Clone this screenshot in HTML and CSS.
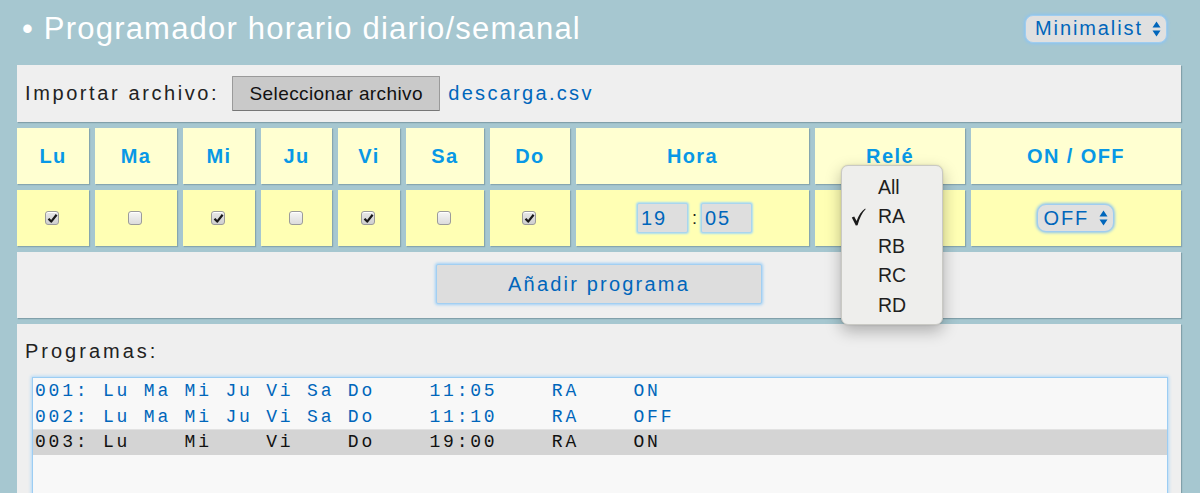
FILE: index.html
```html
<!DOCTYPE html>
<html lang="es">
<head>
<meta charset="utf-8">
<title>Programador horario</title>
<link rel="stylesheet" href="styles.css">
</head>
<body>
<header class="topbar">
  <h1 class="title">• Programador horario diario/semanal</h1>
  <div class="select theme-select">
    <span>Minimalist</span>
    <svg class="arrows" width="9" height="16" viewBox="0 0 9 16"><path d="M4.5 0.5 L8.5 6.5 L0.5 6.5 Z M4.5 15.5 L8.5 9.5 L0.5 9.5 Z" fill="#0066bb"/></svg>
  </div>
</header>
<main class="content">
  <section class="panel import">
    <span class="label">Importar archivo:</span>
    <button class="file-btn">Seleccionar archivo</button>
    <span class="filename">descarga.csv</span>
  </section>

  <section class="grid">
    <div class="cell head">Lu</div>
    <div class="cell head">Ma</div>
    <div class="cell head">Mi</div>
    <div class="cell head">Ju</div>
    <div class="cell head">Vi</div>
    <div class="cell head">Sa</div>
    <div class="cell head">Do</div>
    <div class="cell head">Hora</div>
    <div class="cell head">Relé</div>
    <div class="cell head">ON / OFF</div>

    <div class="cell val"><span class="cb checked"><svg width="11" height="11" viewBox="0 0 11 11"><path d="M1.5 5.8 L4.2 8.6 L9.6 1.8" fill="none" stroke="#1a1a1a" stroke-width="2.2" stroke-linejoin="round"/></svg></span></div>
    <div class="cell val"><span class="cb"></span></div>
    <div class="cell val"><span class="cb checked"><svg width="11" height="11" viewBox="0 0 11 11"><path d="M1.5 5.8 L4.2 8.6 L9.6 1.8" fill="none" stroke="#1a1a1a" stroke-width="2.2" stroke-linejoin="round"/></svg></span></div>
    <div class="cell val"><span class="cb"></span></div>
    <div class="cell val"><span class="cb checked"><svg width="11" height="11" viewBox="0 0 11 11"><path d="M1.5 5.8 L4.2 8.6 L9.6 1.8" fill="none" stroke="#1a1a1a" stroke-width="2.2" stroke-linejoin="round"/></svg></span></div>
    <div class="cell val"><span class="cb"></span></div>
    <div class="cell val"><span class="cb checked"><svg width="11" height="11" viewBox="0 0 11 11"><path d="M1.5 5.8 L4.2 8.6 L9.6 1.8" fill="none" stroke="#1a1a1a" stroke-width="2.2" stroke-linejoin="round"/></svg></span></div>
    <div class="cell val hora">
      <span class="field">19</span><span class="colon">:</span><span class="field">05</span>
    </div>
    <div class="cell val rele">
      <div class="menu">
        <div class="menu-item">All</div>
        <div class="menu-item selected"><svg class="tick" width="15" height="18" viewBox="0 0 15 18"><path d="M0.8 9.5 L3.2 8.4 L5.6 13 C7.6 7.5 10.5 3 14.2 0.6 L14.6 1.3 C11.2 4.6 8.6 10 6.6 17.2 L4.8 17.4 Z" fill="#1a1a1a"/></svg>RA</div>
        <div class="menu-item">RB</div>
        <div class="menu-item">RC</div>
        <div class="menu-item">RD</div>
      </div>
    </div>
    <div class="cell val">
      <div class="select onoff">
        <span>OFF</span>
        <svg class="arrows" width="9" height="16" viewBox="0 0 9 16"><path d="M4.5 0.5 L8.5 6.5 L0.5 6.5 Z M4.5 15.5 L8.5 9.5 L0.5 9.5 Z" fill="#0066bb"/></svg>
      </div>
    </div>
  </section>

  <section class="panel add">
    <button class="add-btn">Añadir programa</button>
  </section>

  <section class="panel programs">
    <div class="label">Programas:</div>
    <div class="listbox">
      <div class="row">001: Lu Ma Mi Ju Vi Sa Do    11:05    RA    ON</div>
      <div class="row">002: Lu Ma Mi Ju Vi Sa Do    11:10    RA    OFF</div>
      <div class="row active">003: Lu    Mi    Vi    Do    19:00    RA    ON</div>
      <div class="row empty"></div>
    </div>
  </section>
</main>
</body>
</html>
```

FILE: styles.css
```css
* { box-sizing: border-box; }

html, body {
  margin: 0;
  padding: 0;
  height: 100%;
  overflow: hidden;
}

body {
  background: #a6c7d0;
  font-family: "Liberation Sans", Arial, Helvetica, sans-serif;
  color: #222;
}

.topbar {
  display: flex;
  align-items: center;
  justify-content: space-between;
  height: 65px;
  padding: 0 33px 8px 22px;
}

.title {
  margin: 0;
  font-size: 31px;
  line-height: 36px;
  font-weight: normal;
  color: #ffffff;
  letter-spacing: 1.2px;
}

.select {
  display: flex;
  align-items: center;
  background: #e0e0e0;
  border: 1px solid #9fcdf0;
  box-shadow: 0 0 3px 1px #8cc4f2;
  border-radius: 8px;
  color: #0066bb;
  font-size: 20px;
  letter-spacing: 1.9px;
}

.theme-select {
  width: 142px;
  height: 28px;
  padding: 0 5px 0 9px;
  justify-content: space-between;
}

.content {
  display: flex;
  flex-direction: column;
  gap: 6px;
  margin-left: 17px;
  width: 1164px;
}

.panel {
  background: #efefef;
  box-shadow: 1px 1px 1px rgba(60, 90, 100, 0.35);
}

.import {
  display: flex;
  align-items: center;
  height: 57px;
  padding: 0 8px;
}

.label {
  font-size: 20px;
  letter-spacing: 2.6px;
  color: #222;
}

.file-btn {
  margin-left: 13px;
  height: 35px;
  width: 208px;
  padding: 0;
  background: #c9c9c9;
  border: 1px solid #9a9a9a;
  border-bottom-color: #777;
  border-radius: 1px;
  font-family: "Liberation Sans", Arial, sans-serif;
  font-size: 19px;
  letter-spacing: 0.4px;
  color: #111;
}

.filename {
  margin-left: 8px;
  font-size: 20px;
  letter-spacing: 2.3px;
  color: #0066bb;
}

.grid {
  display: grid;
  grid-template-columns: 72px 82px 72px 71px 62px 78px 80px 233px 150px 210px;
  grid-template-rows: 56px 56px;
  gap: 6px;
}

.cell {
  display: flex;
  align-items: center;
  justify-content: center;
  box-shadow: 1px 1px 1px rgba(60, 90, 100, 0.3);
}

.head {
  background: #ffffd1;
  color: #0898e6;
  font-size: 20px;
  font-weight: bold;
  letter-spacing: 1.4px;
  padding-top: 1px;
}

.val {
  background: #ffffb4;
}

.cb {
  display: flex;
  align-items: center;
  justify-content: center;
  width: 14px;
  height: 14px;
  margin-right: 2px;
  border: 1px solid #9b9b9b;
  border-radius: 3px;
  background: linear-gradient(#f6f6f6, #dcdcdc);
  box-shadow: inset 0 1px 0 #fff;
}

.cb.checked {
  background: linear-gradient(#e8e8e8, #cfcfcf);
}

.hora {
  gap: 3px;
  padding-left: 4px;
}

.field {
  display: flex;
  align-items: center;
  width: 51px;
  height: 30px;
  padding-left: 3px;
  background: #dedede;
  border: 1px solid #a9d6ee;
  box-shadow: 0 0 2px 1px #a9dcf5;
  border-radius: 2px;
  color: #0066bb;
  font-size: 20px;
  letter-spacing: 2px;
}

.colon {
  font-size: 18px;
  color: #222;
  margin: 0 1px;
}

.rele {
  position: relative;
}

.menu {
  position: absolute;
  left: 26px;
  top: -25px;
  width: 102px;
  height: 160px;
  padding-top: 7px;
  background: #eeeeec;
  border: 1px solid #c9c9c4;
  border-radius: 7px;
  box-shadow: 0 6px 16px rgba(0, 0, 0, 0.28), 0 0 2px rgba(0, 0, 0, 0.15);
  z-index: 5;
}

.menu-item {
  position: relative;
  height: 29.4px;
  line-height: 29.4px;
  padding-left: 36px;
  font-size: 19.5px;
  color: #1e1e1e;
}

.tick {
  position: absolute;
  left: 9px;
  top: 6px;
}

.onoff {
  width: 77px;
  height: 28px;
  padding: 0 5px 0 6px;
  justify-content: space-between;
  border-radius: 9px;
  margin-right: 2px;
}

.add {
  display: flex;
  justify-content: center;
  align-items: flex-start;
  height: 66px;
  padding-top: 12px;
}

.add-btn {
  width: 326px;
  height: 40px;
  background: #dddddd;
  border: 1px solid #a2cff2;
  box-shadow: 0 0 3px 1px #9fd0f7;
  border-radius: 2px;
  font-family: "Liberation Sans", Arial, sans-serif;
  font-size: 20px;
  letter-spacing: 2.2px;
  color: #0066bb;
  padding: 0;
}

.programs {
  height: 200px;
  padding: 15px 13px 0 15px;
}

.programs .label {
  margin-left: -7px;
  line-height: 24px;
  letter-spacing: 3px;
}

.listbox {
  margin-top: 14px;
  background: #f8f8f8;
  border: 1px solid #9ccdf3;
  box-shadow: 0 0 3px 1px #b3d9f8;
  height: 140px;
}

.row {
  height: 25.7px;
  line-height: 26px;
  padding-left: 2px;
  font-family: "Liberation Mono", "Courier New", monospace;
  font-size: 18px;
  letter-spacing: 2.8px;
  white-space: pre;
  color: #0066bb;
}

.row.active {
  background: #d4d4d4;
  color: #111;
  border-top: 1px solid #e2e2e2;
  line-height: 24px;
}
```
